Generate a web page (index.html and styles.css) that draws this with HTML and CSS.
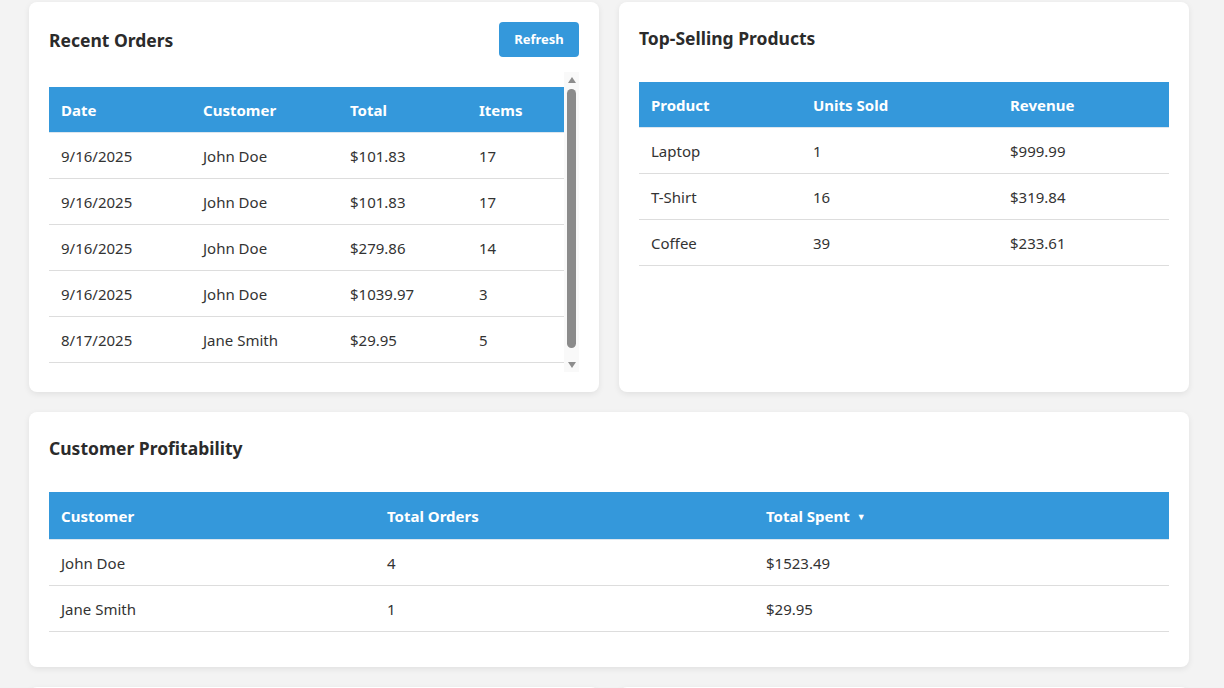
FILE: index.html
```html
<!DOCTYPE html>
<html lang="en">
<head>
<meta charset="utf-8">
<title>Dashboard</title>
<link rel="stylesheet" href="styles.css">
</head>
<body>
<main class="dashboard">
  <section class="card">
    <div class="card-header">
      <h2 class="card-title">Recent Orders</h2>
      <button class="btn" type="button">Refresh</button>
    </div>
    <div class="scroll-wrap">
      <div class="scroll-body">
        <table class="data-table orders">
          <thead>
            <tr><th class="c-date">Date</th><th class="c-cust">Customer</th><th class="c-total">Total</th><th class="c-items">Items</th></tr>
          </thead>
          <tbody>
            <tr><td>9/16/2025</td><td>John Doe</td><td>$101.83</td><td>17</td></tr>
            <tr><td>9/16/2025</td><td>John Doe</td><td>$101.83</td><td>17</td></tr>
            <tr><td>9/16/2025</td><td>John Doe</td><td>$279.86</td><td>14</td></tr>
            <tr><td>9/16/2025</td><td>John Doe</td><td>$1039.97</td><td>3</td></tr>
            <tr><td>8/17/2025</td><td>Jane Smith</td><td>$29.95</td><td>5</td></tr>
          </tbody>
        </table>
      </div>
      <div class="scrollbar" aria-hidden="true">
        <span class="sb-up"></span>
        <span class="sb-thumb"></span>
        <span class="sb-down"></span>
      </div>
    </div>
  </section>

  <section class="card">
    <h2 class="card-title solo">Top-Selling Products</h2>
    <table class="data-table products">
      <thead>
        <tr><th class="c-prod">Product</th><th class="c-units">Units Sold</th><th class="c-rev">Revenue</th></tr>
      </thead>
      <tbody>
        <tr><td>Laptop</td><td>1</td><td>$999.99</td></tr>
        <tr><td>T-Shirt</td><td>16</td><td>$319.84</td></tr>
        <tr><td>Coffee</td><td>39</td><td>$233.61</td></tr>
      </tbody>
    </table>
  </section>

  <section class="card wide">
    <h2 class="card-title solo">Customer Profitability</h2>
    <table class="data-table profit">
      <thead>
        <tr><th class="c-pcust">Customer</th><th class="c-orders">Total Orders</th><th class="c-spent">Total Spent <span class="sort">&#9660;</span></th></tr>
      </thead>
      <tbody>
        <tr><td>John Doe</td><td>4</td><td>$1523.49</td></tr>
        <tr><td>Jane Smith</td><td>1</td><td>$29.95</td></tr>
      </tbody>
    </table>
  </section>

  <section class="card"></section>
  <section class="card"></section>
</main>
</body>
</html>
```

FILE: styles.css
```css
html {
  background: #f3f3f3;
}

body {
  margin: 0;
  font-family: "Noto Sans", "Open Sans", sans-serif;
  color: #333;
}

.dashboard {
  display: grid;
  grid-template-columns: 570px 570px;
  gap: 20px;
  padding: 2px 35px 20px 29px;
}

.card {
  background: #fff;
  border-radius: 8px;
  box-shadow: 0 2px 6px rgba(0, 0, 0, 0.08);
  padding: 20px;
  min-height: 350px;
}

.card.wide {
  grid-column: 1 / -1;
  min-height: 0;
  padding-bottom: 35px;
}

.card-header {
  display: flex;
  align-items: center;
  justify-content: space-between;
  height: 35px;
  margin-bottom: 15px;
}

.card-title {
  margin: 0;
  font-size: 17.5px;
  font-weight: 700;
  line-height: 24px;
  color: #2b2b2b;
}

.card-title.solo {
  padding-top: 4px;
  margin-bottom: 32px;
}

.btn {
  height: 35px;
  width: 80px;
  border: none;
  border-radius: 4px;
  background: #3498db;
  color: #fff;
  font-family: inherit;
  font-size: 13px;
  font-weight: 700;
  padding: 0 0 2px;
}

.scroll-wrap {
  display: flex;
  height: 300px;
}

.scroll-body {
  flex: 1;
  min-width: 0;
  overflow: hidden;
}

.scrollbar {
  flex: 0 0 15px;
  display: flex;
  flex-direction: column;
  align-items: center;
  background: #f9f9f9;
}

.sb-up,
.sb-down {
  width: 0;
  height: 0;
  border-left: 4.5px solid transparent;
  border-right: 4.5px solid transparent;
}

.sb-up {
  margin-top: 5px;
  border-bottom: 6px solid #8d8d8d;
}

.sb-thumb {
  margin-top: 6px;
  width: 9px;
  height: 259px;
  border-radius: 5px;
  background: #8b8b8b;
}

.sb-down {
  margin-top: 14px;
  border-top: 6px solid #8d8d8d;
}

.data-table {
  width: 100%;
  border-collapse: collapse;
  table-layout: fixed;
  font-size: 15px;
}

.data-table.orders {
  margin-top: 15px;
}

.data-table thead tr {
  height: 45px;
}

.data-table th {
  background: #3498db;
  color: #fff;
  font-weight: 700;
  text-align: left;
  padding: 13px 12px 11px;
  line-height: 21px;
  border-bottom: 1px solid #dde6ee;
}

.data-table td {
  padding: 13px 12px 11px;
  line-height: 21px;
  border-bottom: 1px solid #ddd;
}

.profit thead tr {
  height: 47px;
}

.profit th {
  padding: 14px 12px 12px;
}

.sort {
  display: inline-block;
  font-size: 9px;
  margin-left: 3px;
  vertical-align: 2px;
}

.c-date { width: 118px; }
.c-cust { width: 123px; }
.c-total { width: 105px; }
.c-items { width: auto; }

.c-prod { width: 138px; }
.c-units { width: 173px; }
.c-rev { width: auto; }

.c-pcust { width: 302px; }
.c-orders { width: 355px; }
.c-spent { width: auto; }
```
